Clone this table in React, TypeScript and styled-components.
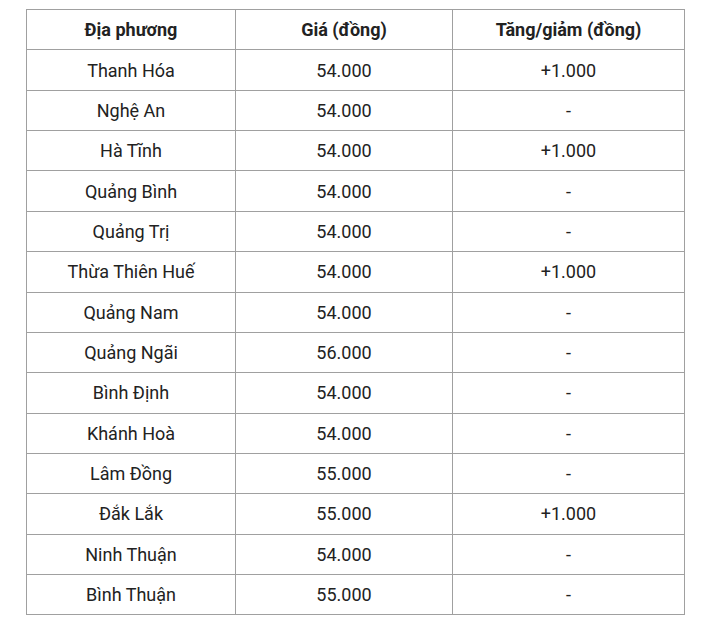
import styled, { createGlobalStyle } from "styled-components";

const GlobalStyle = createGlobalStyle`
  body {
    margin: 0;
    background: #fff;
    font-family: Roboto, "Noto Sans", sans-serif;
    color: #222;
  }
`;

interface PriceRow {
  region: string;
  price: string;
  change: string;
}

const ROWS: PriceRow[] = [
  { region: "Thanh Hóa", price: "54.000", change: "+1.000" },
  { region: "Nghệ An", price: "54.000", change: "-" },
  { region: "Hà Tĩnh", price: "54.000", change: "+1.000" },
  { region: "Quảng Bình", price: "54.000", change: "-" },
  { region: "Quảng Trị", price: "54.000", change: "-" },
  { region: "Thừa Thiên Huế", price: "54.000", change: "+1.000" },
  { region: "Quảng Nam", price: "54.000", change: "-" },
  { region: "Quảng Ngãi", price: "56.000", change: "-" },
  { region: "Bình Định", price: "54.000", change: "-" },
  { region: "Khánh Hoà", price: "54.000", change: "-" },
  { region: "Lâm Đồng", price: "55.000", change: "-" },
  { region: "Đắk Lắk", price: "55.000", change: "+1.000" },
  { region: "Ninh Thuận", price: "54.000", change: "-" },
  { region: "Bình Thuận", price: "55.000", change: "-" },
];

export default function App() {
  return (
    <>
      <GlobalStyle />
      <Page>
        <Table>
          <colgroup>
            <col style={{ width: 209 }} />
            <col style={{ width: 217 }} />
            <col style={{ width: 232 }} />
          </colgroup>
          <thead>
            <Row>
              <HeadCell>Địa phương</HeadCell>
              <HeadCell>Giá (đồng)</HeadCell>
              <HeadCell>Tăng/giảm (đồng)</HeadCell>
            </Row>
          </thead>
          <tbody>
            {ROWS.map((r) => (
              <Row key={r.region}>
                <Cell>{r.region}</Cell>
                <Cell>{r.price}</Cell>
                <Cell>{r.change}</Cell>
              </Row>
            ))}
          </tbody>
        </Table>
      </Page>
    </>
  );
}

const Page = styled.div`
  padding: 9px 0 0 26px;
`;

const Table = styled.table`
  border-collapse: collapse;
  table-layout: fixed;
  width: 659px;
  font-size: 18px;
`;

const Row = styled.tr`
  height: 40.37px;
`;

const HeadCell = styled.th`
  border: 1px solid #a0a0a0;
  padding: 0 8px;
  font-weight: 700;
  text-align: center;
  color: #222;
`;

const Cell = styled.td`
  border: 1px solid #a0a0a0;
  padding: 0 8px;
  text-align: center;
  color: #222;
`;
